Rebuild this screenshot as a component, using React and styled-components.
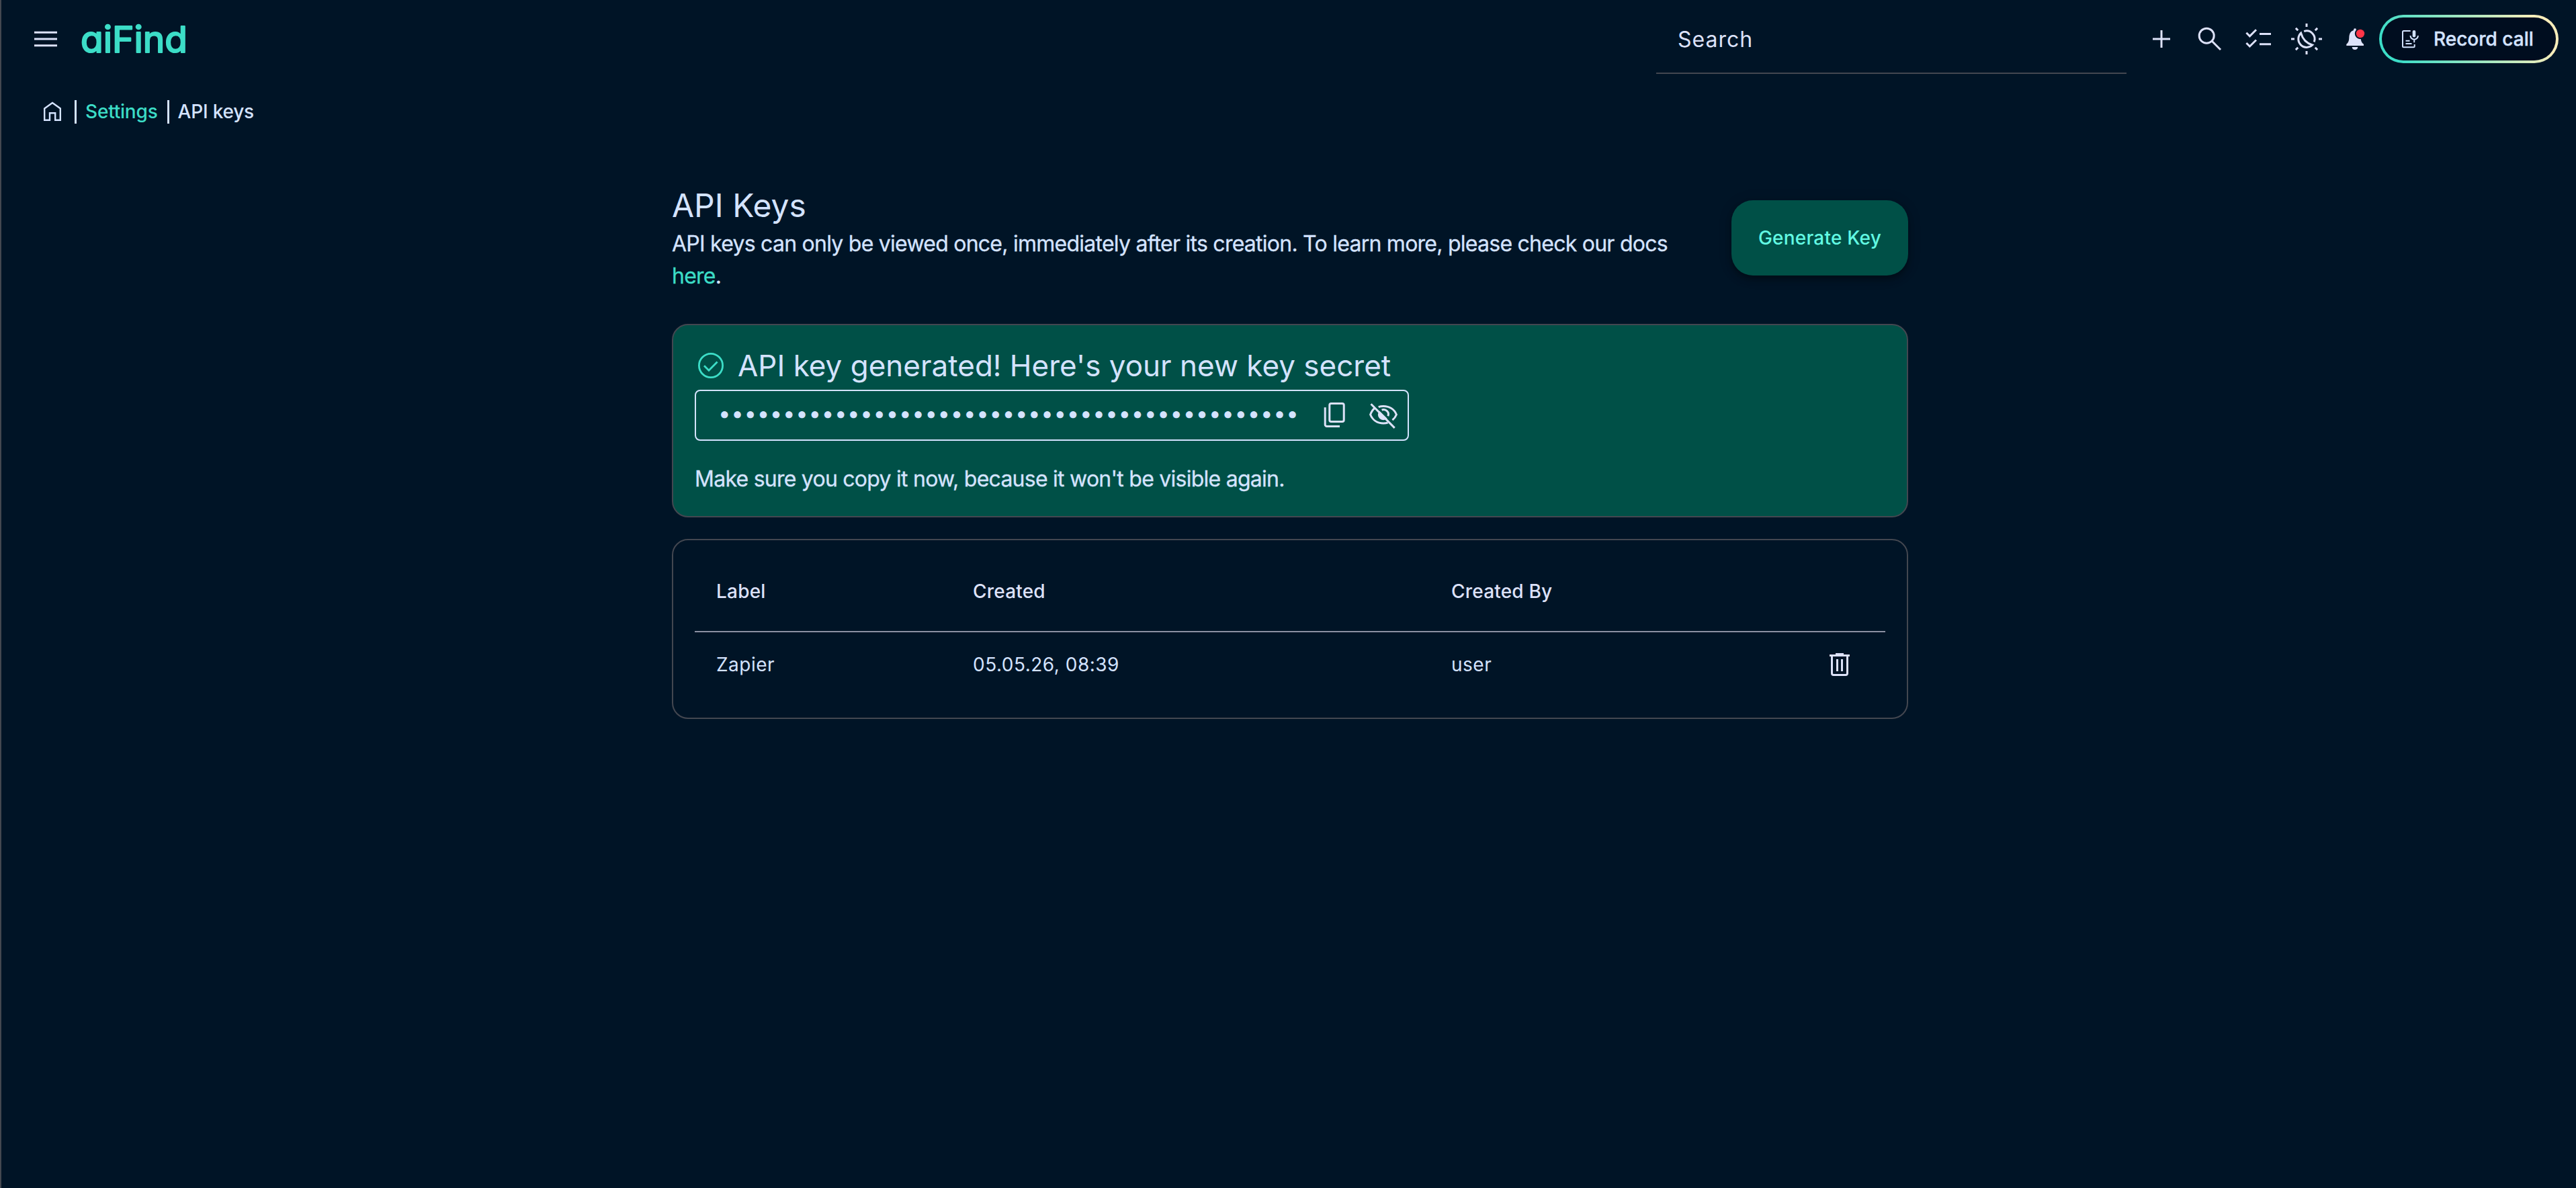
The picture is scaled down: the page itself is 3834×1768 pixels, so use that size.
import { useState } from "react";
import styled, { createGlobalStyle } from "styled-components";

const keys = [{ id: 1, label: "Zapier", created: "05.05.26, 08:39", createdBy: "user" }];

const SECRET_LENGTH = 45;

const MenuIcon = () => (
  <Icon viewBox="0 0 48 48">
    <path d="M7 14.2h34M7 24h34M7 33.8h34" />
  </Icon>
);

const PlusIcon = () => (
  <Icon viewBox="0 0 48 48">
    <path d="M24 11v26M11 24h26" />
  </Icon>
);

const SearchIcon = () => (
  <Icon viewBox="0 0 48 48">
    <circle cx="19.2" cy="19.2" r="11" />
    <path d="M27 27l13 13" />
  </Icon>
);

const ChecklistIcon = () => (
  <Icon viewBox="0 0 48 48">
    <path d="M6.4 14.8l5 5L21 10.3M6.4 30l5 5L21 25.5M26 16.5h17M26 31.7h17" />
  </Icon>
);

const ThemeIcon = () => (
  <Icon viewBox="0 0 48 48">
    <path d="M15.6 15.2A12 12 0 0 0 32.6 33C24.5 30.6 18 24 15.6 15.2z" />
    <path d="M20.2 12.6A12 12 0 0 1 35.2 28.4" />
    <path d="M24 1v5M24 42v5M1 24h5M42 24h5M7.9 7.9l3.3 3.3M36.8 36.8l3.3 3.3M7.9 40.1l3.3-3.3M36.8 11.2l3.3-3.3" />
  </Icon>
);

const BellIcon = () => (
  <Icon viewBox="0 0 48 48">
    <path
      fill="currentColor"
      stroke="none"
      d="M11.3 34v-2.2c3.4-2.7 3.7-5.6 4-9.8.3-6 2.2-9.4 6.7-11v-.8a2 2 0 0 1 4 0v.8c4.5 1.6 6.4 5 6.7 11 .3 4.2.6 7.1 4.3 9.8V34zM19.7 36h8.6c0 2.4-1.9 4-4.3 4s-4.3-1.6-4.3-4z"
    />
    <circle cx="32" cy="16" r="8.2" fill="#001426" stroke="none" />
    <circle cx="32" cy="16" r="6.2" fill="#ff3547" stroke="none" />
  </Icon>
);

const RecordIcon = () => (
  <SmallIcon viewBox="0 0 26 27">
    <path d="M12.7 1H2.5A1.5 1.5 0 0 0 1 2.5v21.2a1.5 1.5 0 0 0 1.5 1.5h14.7a1.5 1.5 0 0 0 1.5-1.5V21" />
    <path d="M5.5 15.8h6M5.5 19.9h9M12.5 8a5.7 5.7 0 0 0 11.4 0M18.2 13.7v4.6" />
    <rect x="15.7" y="0" width="4.6" height="10.6" rx="2.3" fill="currentColor" stroke="none" />
  </SmallIcon>
);

const HomeIcon = () => (
  <HomeSvg viewBox="0 0 26 30">
    <path d="M1.2 10.4L13 2l11.8 8.4v17.4h-7.6V17.2H9v10.6H1.2z" />
  </HomeSvg>
);

const CheckCircleIcon = () => (
  <Icon viewBox="0 0 48 48">
    <circle cx="24" cy="24" r="17.6" />
    <path d="M14 24.2l7 7L33.6 18.4" />
  </Icon>
);

const CopyIcon = () => (
  <Icon viewBox="0 0 48 48">
    <rect x="16.8" y="6.5" width="21.4" height="27" rx="2.4" />
    <path d="M10.2 12.3v25.6a2.5 2.5 0 0 0 2.5 2.5H32" />
  </Icon>
);

const EyeOffIcon = () => (
  <Icon viewBox="0 0 48 48">
    <path d="M12.2 13.2C9.2 15.5 7 18.8 5.6 23c3.2 8 10.5 13 19.4 13 2.4 0 4.5-.3 6.6-1M17.7 11.6c2.3-.8 4.7-1.2 7.3-1.2 8.9 0 16.3 4.7 19.4 12.6-1.3 3.3-3.3 5.9-6 8.1" />
    <path d="M22.6 16.2a7 7 0 0 1 9.3 9" />
    <path fill="currentColor" stroke="none" d="M19.2 17.4a8 8 0 0 0 11.4 11.4z" />
    <path d="M6.5 7.3l35.2 35.6" />
  </Icon>
);

const TrashIcon = () => (
  <Icon viewBox="0 0 48 48">
    <path d="M9 10.5h30M12.5 10.5v26.5a2.5 2.5 0 0 0 2.5 2.5h18a2.5 2.5 0 0 0 2.5-2.5V10.5M20.5 16v18M27.5 16v18" />
    <path strokeWidth="2" d="M18 8h12" />
  </Icon>
);

const Logo = () => (
  <LogoSvg viewBox="0 0 160 60">
    <text x="0" y="49.5" textLength="159" lengthAdjust="spacingAndGlyphs">
      aiFind
    </text>
  </LogoSvg>
);

const App = () => {
  const [search, setSearch] = useState("");

  return (
    <>
      <GlobalStyle />
      <Page>
        <TopBar>
          <IconButton>
            <MenuIcon />
          </IconButton>
          <Logo />
          <SearchInput
            placeholder="Search"
            value={search}
            onChange={e => setSearch(e.target.value)}
          />
          <Actions>
            <IconButton>
              <PlusIcon />
            </IconButton>
            <IconButton>
              <SearchIcon />
            </IconButton>
            <IconButton>
              <ChecklistIcon />
            </IconButton>
            <IconButton>
              <ThemeIcon />
            </IconButton>
            <IconButton>
              <BellIcon />
            </IconButton>
          </Actions>
          <RecordButton>
            <RecordIcon />
            Record call
          </RecordButton>
        </TopBar>

        <Breadcrumbs>
          <HomeIcon />
          <Separator />
          <Crumb $active>Settings</Crumb>
          <Separator />
          <Crumb>API keys</Crumb>
        </Breadcrumbs>

        <Content>
          <Intro>
            <IntroText>
              <Title>API Keys</Title>
              <Text>
                API keys can only be viewed once, immediately after its creation. To learn
                more, please check our docs <DocsLink>here</DocsLink>.
              </Text>
            </IntroText>
            <GenerateButton>Generate Key</GenerateButton>
          </Intro>

          <SecretCard>
            <SecretTitle>
              <CheckCircleIcon />
              <span>API key generated! Here's your new key secret</span>
            </SecretTitle>
            <SecretField>
              <Dots>{"•".repeat(SECRET_LENGTH)}</Dots>
              <IconButton>
                <CopyIcon />
              </IconButton>
              <IconButton>
                <EyeOffIcon />
              </IconButton>
            </SecretField>
            <Text>Make sure you copy it now, because it won't be visible again.</Text>
          </SecretCard>

          <TableCard>
            <HeadRow>
              <span>Label</span>
              <span>Created</span>
              <span>Created By</span>
            </HeadRow>
            {keys.map(key => (
              <Row key={key.id}>
                <span>{key.label}</span>
                <span>{key.created}</span>
                <span>{key.createdBy}</span>
                <IconButton>
                  <TrashIcon />
                </IconButton>
              </Row>
            ))}
          </TableCard>
        </Content>
      </Page>
    </>
  );
};

export default App;

const GlobalStyle = createGlobalStyle`
  * {
    box-sizing: border-box;
  }

  body {
    margin: 0;
    background-color: #001426;
    color: #d4e3ff;
    font-family: Inter, "Liberation Sans", sans-serif;
  }

  button, input {
    font-family: inherit;
  }
`;

const Page = styled.div`
  min-height: 100vh;
  border-left: 2px solid #434750;
`;

const Icon = styled.svg`
  display: block;
  flex: none;
  width: 48px;
  height: 48px;
  fill: none;
  stroke: currentColor;
  stroke-width: 3;
`;

const SmallIcon = styled(Icon)`
  width: 26px;
  height: 27px;
  stroke-width: 2;
`;

const HomeSvg = styled(Icon)`
  width: 26px;
  height: 30px;
  stroke-width: 2.4;
`;

const LogoSvg = styled.svg`
  width: 160px;
  height: 60px;
  margin-left: 28px;
  overflow: visible;

  text {
    font-size: 54px;
    font-weight: 400;
    font-feature-settings: "cv11";
    fill: #3cddc7;
    stroke: #3cddc7;
    stroke-width: 2.2;
    stroke-linejoin: round;
  }
`;

const IconButton = styled.button`
  display: flex;
  flex: none;
  padding: 0;
  border: none;
  background: none;
  color: #dde2f9;
  cursor: pointer;
`;

const TopBar = styled.header`
  display: flex;
  align-items: center;
  height: 116px;
  padding: 0 26px 0 42px;
`;

const SearchInput = styled.input`
  width: 700px;
  height: 104px;
  margin-left: auto;
  padding: 3px 32px 0;
  border: none;
  border-bottom: 2px solid #434750;
  background: none;
  color: #dde2f9;
  font-size: 32px;
  letter-spacing: 1px;
  outline: none;

  &::placeholder {
    color: #dde2f9;
    opacity: 1;
  }
`;

const Actions = styled.div`
  display: flex;
  gap: 24px;
  margin-left: 28px;
`;

const RecordButton = styled.button`
  display: flex;
  align-items: center;
  gap: 21px;
  width: 267px;
  height: 72px;
  margin-left: 12px;
  padding: 0 0 0 30px;
  border: 4px solid transparent;
  border-radius: 36px;
  background:
    linear-gradient(#000d1f, #000d1f) padding-box,
    linear-gradient(60deg, #3cddc7 10%, #f9edba 88%) border-box;
  color: #d4e3ff;
  font-size: 28px;
  font-weight: 500;
  white-space: nowrap;
  -webkit-text-stroke: 0.4px;
`;

const Breadcrumbs = styled.nav`
  display: flex;
  align-items: center;
  height: 36px;
  margin-top: 32px;
  padding-left: 63px;
`;

const Separator = styled.span`
  width: 3px;
  height: 35px;
  margin: 0 13px 0 14px;
  background-color: #d4e3ff;

  svg + & {
    margin-left: 20px;
  }
`;

const Crumb = styled.span`
  color: ${props => (props.$active ? "#3cddc7" : "#d4e3ff")};
  font-size: 28px;
  font-weight: 450;
  letter-spacing: -0.2px;
`;

const Content = styled.main`
  width: 1840px;
  margin-left: 998px;
  padding-top: 88px;
`;

const Intro = styled.section`
  display: flex;
  align-items: center;
  justify-content: space-between;
  gap: 64px;
  height: 164px;
  margin-bottom: 46px;
`;

const IntroText = styled.div`
  flex: 1;
`;

const Title = styled.h1`
  margin: 0;
  font-size: 48px;
  font-weight: 400;
  line-height: 66px;
`;

const Text = styled.p`
  margin: 0;
  font-size: 32px;
  line-height: 48px;
  letter-spacing: -0.75px;
  -webkit-text-stroke: 0.3px;
`;

const DocsLink = styled.a`
  color: #3cddc7;
`;

const GenerateButton = styled.button`
  width: 263px;
  height: 112px;
  border: none;
  border-radius: 32px;
  background-color: #005047;
  box-shadow: 0 6px 10px rgba(0, 0, 0, 0.3), 0 2px 20px rgba(0, 0, 0, 0.15);
  color: #62fae3;
  font-size: 28px;
  font-weight: 500;
  letter-spacing: 0.2px;
`;

const Card = styled.section`
  border: 2px solid #434750;
  border-radius: 24px;
`;

const SecretCard = styled(Card)`
  height: 288px;
  margin-bottom: 32px;
  padding: 32px;
  background-color: #005047;
`;

const SecretTitle = styled.h2`
  display: flex;
  align-items: center;
  gap: 16px;
  margin: 0 0 8px;
  font-size: 44px;
  font-weight: 400;
  line-height: 56px;

  svg {
    color: #3cddc7;
    stroke-width: 2.8;
  }
`;

const SecretField = styled.div`
  display: flex;
  align-items: center;
  gap: 24px;
  width: 1063px;
  height: 76px;
  margin-bottom: 33px;
  padding: 0 13px 0 33px;
  border: 2px solid #d4e3ff;
  border-radius: 8px;
`;

const Dots = styled.span`
  flex: 1;
  padding-bottom: 6px;
  font-size: 33px;
  line-height: 48px;
  letter-spacing: 0.65px;
  white-space: nowrap;
`;

const TableCard = styled(Card)`
  height: 268px;
  padding: 16px 32px 0;
`;

const TableRow = styled.div`
  display: grid;
  grid-template-columns: 382px 712px 1fr auto;
  align-items: center;
  padding: 0 44px 0 32px;
  font-size: 28px;
`;

const HeadRow = styled(TableRow)`
  height: 121px;
  border-bottom: 2px solid #8b90a2;
  color: #dde2f9;
  font-weight: 500;
  letter-spacing: 0.2px;
`;

const Row = styled(TableRow)`
  height: 96px;
  letter-spacing: 0.5px;
`;
